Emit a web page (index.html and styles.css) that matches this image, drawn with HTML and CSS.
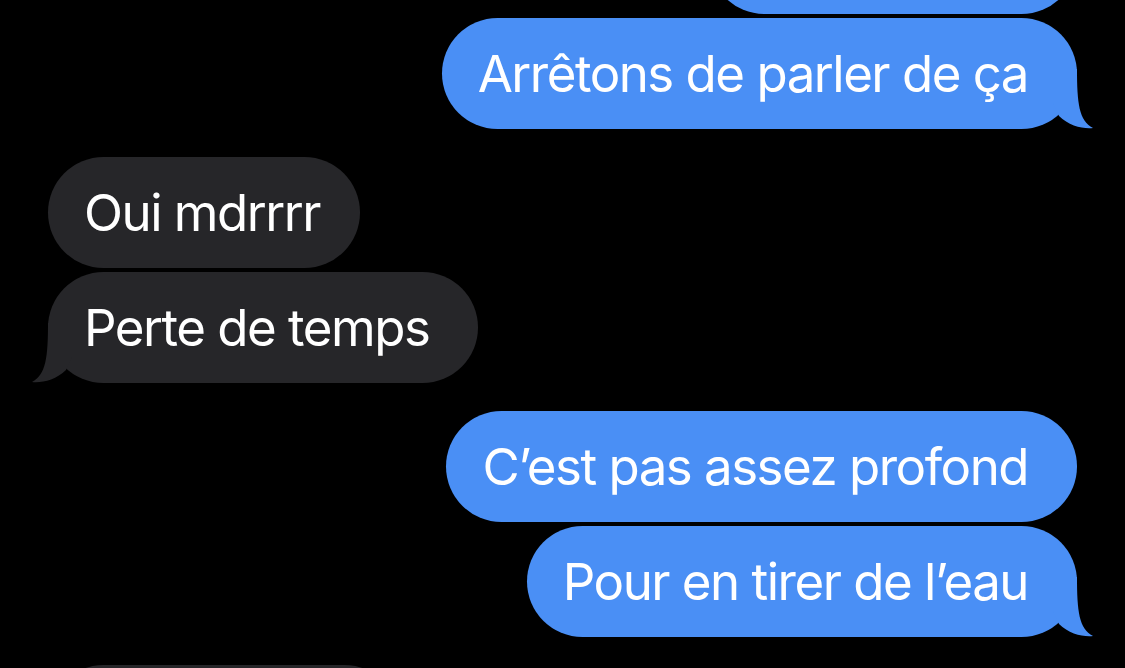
FILE: index.html
```html
<!DOCTYPE html>
<html lang="fr">
<head>
    <meta charset="UTF-8">
    <meta name="viewport" content="width=device-width, initial-scale=1.0">
    <link rel="stylesheet" href="styles.css">
    <title>Messages</title>
</head>
<body>

    <div class="thread">

        <div class="group sent">
            <div class="bubble bubble-cut-top"></div>
            <div class="bubble">
                Arrêtons de parler de ça
                <svg class="tail" viewBox="0 0 40 60" aria-hidden="true"><path d="M24 0 C24 34 26 52 40 59 C30 60 16 57 6 47 L0 34 L0 0 Z"/></svg>
            </div>
        </div>

        <div class="group received">
            <div class="bubble">Oui mdrrrr</div>
            <div class="bubble">
                Perte de temps
                <svg class="tail" viewBox="0 0 40 60" aria-hidden="true"><path d="M24 0 C24 34 26 52 40 59 C30 60 16 57 6 47 L0 34 L0 0 Z"/></svg>
            </div>
        </div>

        <div class="group sent">
            <div class="bubble">C’est pas assez profond</div>
            <div class="bubble">
                Pour en tirer de l’eau
                <svg class="tail" viewBox="0 0 40 60" aria-hidden="true"><path d="M24 0 C24 34 26 52 40 59 C30 60 16 57 6 47 L0 34 L0 0 Z"/></svg>
            </div>
        </div>

        <div class="group received">
            <div class="bubble bubble-cut-bottom"></div>
        </div>

    </div>

</body>
</html>
```

FILE: styles.css
```css
body {
    margin: 0;
    padding: 0;
    background-color: #000;
    font-family: 'Inter', 'Liberation Sans', sans-serif;
    overflow: hidden;
}

.thread {
    display: flex;
    flex-direction: column;
    gap: 28px;
    padding: 0 48px;
    margin-top: -97px;
}

.group {
    display: flex;
    flex-direction: column;
    gap: 4px;
}

.group.sent {
    align-items: flex-end;
}

.group.received {
    align-items: flex-start;
}

.bubble {
    position: relative;
    height: 111px;
    line-height: 111px;
    padding: 0 49px 0 36px;
    border-radius: 56px;
    font-size: 51px;
    letter-spacing: -1.5px;
    color: #fff;
    white-space: nowrap;
    box-sizing: border-box;
}

.sent .bubble {
    background-color: #4a8ff5;
}

.received .bubble {
    background-color: #262629;
}

.received .bubble:first-child {
    padding-right: 40px;
}

.bubble-cut-top {
    width: 368px;
}

.received .bubble-cut-bottom {
    width: 352px;
}

.tail {
    position: absolute;
    bottom: 0;
    width: 40px;
    height: 60px;
}

.sent .tail {
    right: -16px;
    fill: #4a8ff5;
}

.received .tail {
    left: -16px;
    fill: #262629;
    transform: scaleX(-1);
}
```
